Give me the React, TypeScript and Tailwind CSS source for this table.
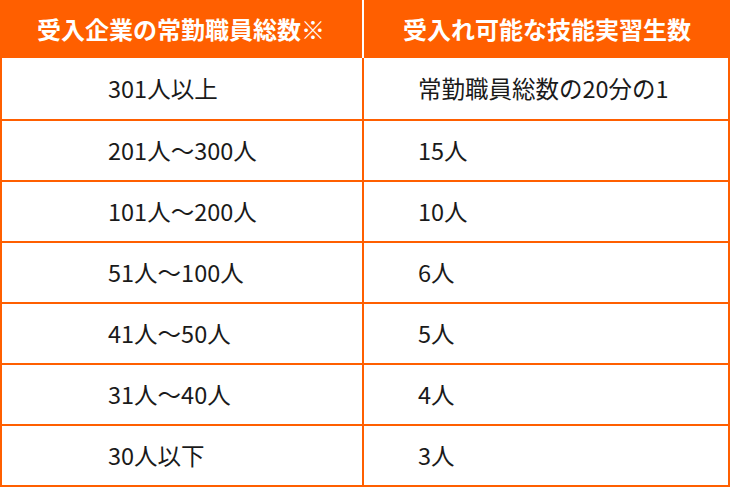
const rows: [string, string][] = [
  ['301人以上', '常勤職員総数の20分の1'],
  ['201人〜300人', '15人'],
  ['101人〜200人', '10人'],
  ['51人〜100人', '6人'],
  ['41人〜50人', '5人'],
  ['31人〜40人', '4人'],
  ['30人以下', '3人'],
]

export default function App() {
  return (
    <div className="w-[730px] h-[487px] bg-white" style={{ fontFamily: '"Noto Sans CJK JP", "Noto Sans", sans-serif' }}>
      {/* header */}
      <div className="flex h-[58px] bg-[#ff5f00] text-white font-bold text-[24px]">
        <div className="w-[364px] flex items-center justify-center border-r-2 border-white">
          受入企業の常勤職員総数※
        </div>
        <div className="flex-1 flex items-center justify-center">
          受入れ可能な技能実習生数
        </div>
      </div>
      <div className="border-x-2 border-[#ff5f00] text-[23.5px] text-[#1a1a1a]">
        {rows.map(([a, b], i) => (
          <div key={a} className={`flex border-b-2 border-[#ff5f00] ${i === 0 ? 'h-[63px]' : 'h-[61px]'}`}>
            <div className="w-[362px] flex items-center pl-[106px] border-r-2 border-[#ff5f00]">{a}</div>
            <div className="flex-1 flex items-center pl-[54px]">{b}</div>
          </div>
        ))}
      </div>
    </div>
  )
}
